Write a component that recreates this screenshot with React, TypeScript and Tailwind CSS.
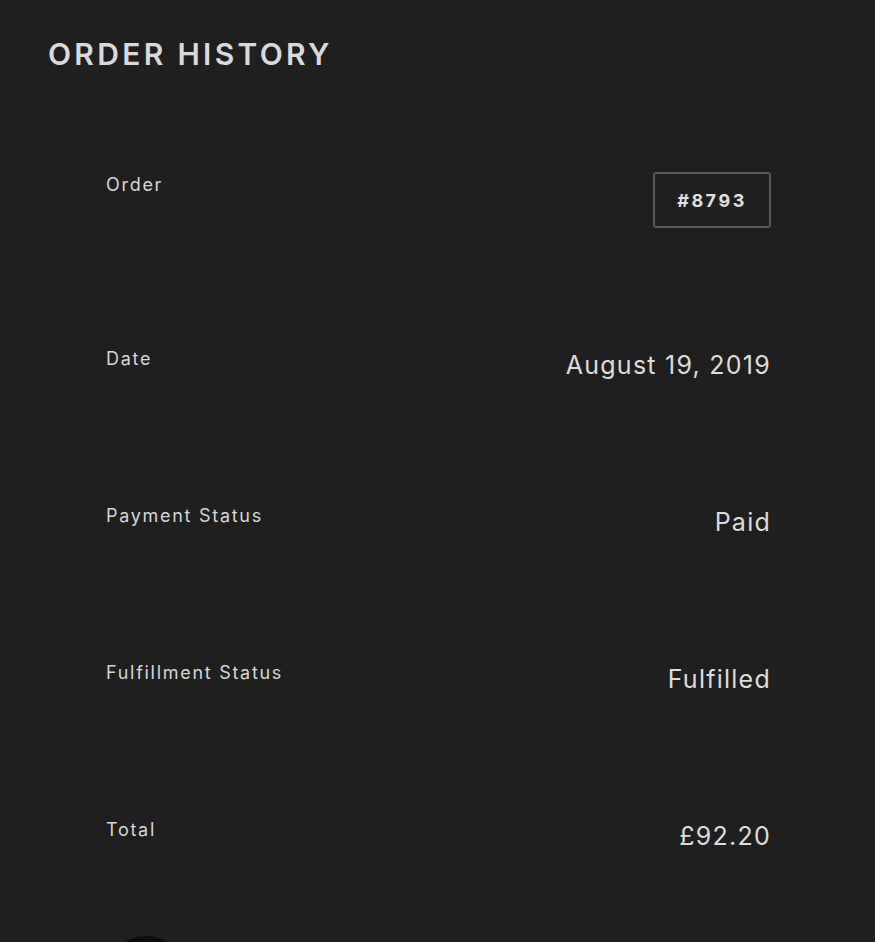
const rows = [
  { label: "Date", value: "August 19, 2019" },
  { label: "Payment Status", value: "Paid" },
  { label: "Fulfillment Status", value: "Fulfilled" },
];

export default function App() {
  return (
    <div className="h-screen overflow-hidden bg-[#1f1f1f] font-['Inter',sans-serif] text-[#d6d6d6]">
      <div className="px-[48px] pt-[36px]">
        <h1 className="text-[30px] font-semibold leading-[36px] tracking-[0.11em] text-[#d8d9dc]">
          ORDER HISTORY
        </h1>
      </div>
      <div className="pl-[106px] pr-[104px] pt-[99px]">
        <div className="flex h-[174px] items-start justify-between">
          <span className="text-[18px] leading-[28px] tracking-[0.095em]">Order</span>
          <span className="mt-[1px] flex h-[56px] w-[118px] items-center justify-center rounded-[3px] border-2 border-[#5a5a5a] text-[18px] font-bold tracking-[0.14em] text-[#e0e0e0]">
            #8793
          </span>
        </div>
        {rows.map((r) => (
          <div key={r.label} className="flex h-[157px] items-start justify-between">
            <span className="text-[18px] leading-[28px] tracking-[0.095em]">{r.label}</span>
            <span className="text-[25px] leading-[40px] tracking-[0.05em] text-[#dcdcdc]">{r.value}</span>
          </div>
        ))}
        <div className="flex h-[120px] items-start justify-between">
          <span className="text-[18px] leading-[28px] tracking-[0.095em]">Total</span>
          <span className="text-[25px] leading-[40px] tracking-[0.05em] text-[#dcdcdc]">£92.20</span>
        </div>
        <div className="h-[80px] w-[80px] rounded-full bg-[#0d0d0d]" />
      </div>
    </div>
  );
}
